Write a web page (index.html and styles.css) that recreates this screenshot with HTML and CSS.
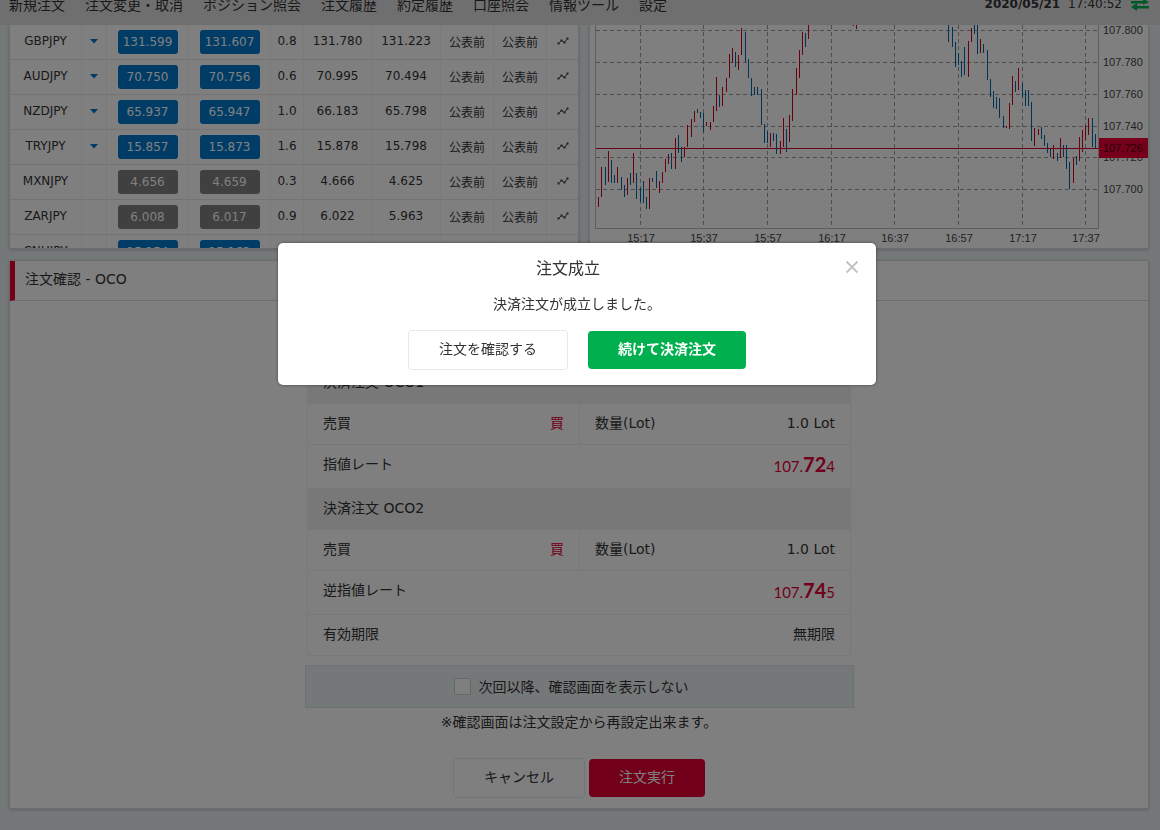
FILE: index.html
```html
<!DOCTYPE html>
<html lang="ja">
<head>
<meta charset="utf-8">
<title>注文確認 - OCO</title>
<link rel="stylesheet" href="styles.css">
</head>
<body>
<header class="topbar">
  <nav class="menu">
    <a href="#">新規注文</a>
    <a href="#">注文変更・取消</a>
    <a href="#">ポジション照会</a>
    <a href="#">注文履歴</a>
    <a href="#">約定履歴</a>
    <a href="#">口座照会</a>
    <a href="#">情報ツール</a>
    <a href="#">設定</a>
  </nav>
  <div class="clock"><b>2020/05/21</b><span>17:40:52</span>
    <svg class="sync" viewBox="0 0 20 16" width="20" height="16" aria-hidden="true"><path d="M1 5h12V2l6 4.500l-6 2V7.500H1zM19 12.500H7V15L1 11l6-4v3h12z"/></svg>
  </div>
</header>

<main class="page">
  <div class="market">
    <section class="panel rates">
      <table class="rate-table">
        <colgroup><col class="c-pair"><col class="c-arrow"><col class="c-price"><col class="c-price"><col class="c-spread"><col class="c-high"><col class="c-low"><col class="c-swap"><col class="c-swap"><col class="c-chart"></colgroup>
        <tbody id="rates"></tbody>
      </table>
    </section>
    <section class="panel chart-panel">
      <svg class="chart" id="chart" viewBox="590 25 558 223" role="img" aria-label="USDJPY"></svg>
    </section>
  </div>

  <section class="panel order">
    <h2 class="order-title">注文確認 - OCO</h2>
    <div class="order-body">
      <div class="detail">
        <div class="row head">決済注文 OCO1</div>
        <div class="row pair">
          <div class="cell"><span>売買</span><span class="buy">買</span></div>
          <div class="cell"><span>数量(Lot)</span><span>1.0 Lot</span></div>
        </div>
        <div class="row tall cell"><span>指値レート</span><span class="rate">107.<b>72</b>4</span></div>
        <div class="row head">決済注文 OCO2</div>
        <div class="row pair">
          <div class="cell"><span>売買</span><span class="buy">買</span></div>
          <div class="cell"><span>数量(Lot)</span><span>1.0 Lot</span></div>
        </div>
        <div class="row tall cell"><span>逆指値レート</span><span class="rate">107.<b>74</b>5</span></div>
        <div class="row cell"><span>有効期限</span><span>無期限</span></div>
      </div>
      <div class="skip">
        <input type="checkbox" id="skip"><label for="skip">次回以降、確認画面を表示しない</label>
      </div>
      <p class="note">※確認画面は注文設定から再設定出来ます。</p>
      <div class="actions">
        <button type="button" class="btn btn-line">キャンセル</button>
        <button type="button" class="btn btn-red">注文実行</button>
      </div>
    </div>
  </section>
</main>

<div class="overlay">
  <div class="modal" role="dialog" aria-modal="true" aria-labelledby="modal-title">
    <div class="modal-head">
      <h1 id="modal-title">注文成立</h1>
      <button type="button" class="close" aria-label="閉じる"><svg viewBox="0 0 14 14" width="14" height="14"><path d="M1.500 1.500l11 11M12.500 1.500l-11 11"/></svg></button>
    </div>
    <p class="message">決済注文が成立しました。</p>
    <div class="modal-actions">
      <button type="button" class="btn btn-line">注文を確認する</button>
      <button type="button" class="btn btn-green">続けて決済注文</button>
    </div>
  </div>
</div>
<script src="app.js"></script>
</body>
</html>
```
FILE: styles.css
```css
* { box-sizing: border-box; }

body {
  margin: 0;
  min-height: 100vh;
  background: #ebf0f3;
  color: #333;
  font: 14px/20px "DejaVu Sans", "Noto Sans CJK JP", sans-serif;
}

h1, h2, p { margin: 0; font-weight: 400; }

button { font: inherit; color: inherit; cursor: pointer; }

/* top menu */
.topbar {
  position: relative;
  z-index: 1;
  display: flex;
  justify-content: space-between;
  align-items: flex-end;
  height: 25px;
  padding: 0 10px 11px 9px;
  overflow: hidden;
  background: #dfdfdf;
}
.menu { display: flex; gap: 20px; font-family: "Noto Sans CJK JP", sans-serif; }
.menu a { color: inherit; text-decoration: none; white-space: nowrap; }
.clock { display: flex; align-items: center; gap: 8px; font-size: 12px; }
.sync { fill: #00b050; }

/* market area */
.page { padding: 0 11px 20px 9px; }
.panel {
  background: #fff;
  border: 1px solid #d5d8db;
  box-shadow: 0 1px 3px rgba(0, 0, 0, .2);
}
.market {
  display: grid;
  grid-template-columns: 57fr 56fr;
  gap: 10px;
  height: 224px;
}
.market .panel { border-top: 0; overflow: hidden; }

.rate-table {
  width: 100%;
  table-layout: fixed;
  border-collapse: separate;
  border-spacing: 0;
  font-size: 12px;
}
.c-pair { width: 72px; }
.c-arrow { width: 25px; }
.c-price { width: 82px; }
.c-spread { width: 33px; }
.c-high { width: 68px; }
.c-low { width: 69px; }
.c-swap { width: 53px; }
.rate-table td {
  height: 35px;
  padding: 0 0 2px;
  text-align: center;
  border-right: 1px solid #f4f5f6;
  border-bottom: 1px solid #e6e6e6;
}
.rate-table td:last-child { border-right: 0; }
.rate-table .price-cell { padding: 0; }
.rate-table .swap { padding: 2px 0 0; }
.price {
  display: block;
  width: 60px;
  height: 24px;
  margin: 0 auto;
  padding: 0;
  border: 0;
  border-radius: 3px;
  background: #0078cd;
  color: #fff;
}
.price.off { background: #808080; }
.drop {
  display: block;
  width: 9px;
  height: 5px;
  margin: 0 auto;
  background: #0078cd;
  clip-path: polygon(0 0, 100% 0, 50% 100%);
}
.mini { display: block; margin: 0 auto; fill: #444; stroke: #444; }
.mini path { fill: none; }

.chart { display: block; width: 100%; font: 11px "Liberation Sans", sans-serif; }
.chart text { fill: #444; }
.chart .grid { stroke: #9c9c9c; fill: none; stroke-dasharray: 4 3; }
.chart .axis { stroke: #bbb; fill: none; }
.chart .up { stroke: #d0021b; fill: none; }
.chart .down { stroke: #0067ad; fill: none; }
.chart .now-line { stroke: #d00030; }
.chart .now-box { fill: #ec0036; }
.chart .now-text { fill: #4c0010; }

/* order confirmation */
.order { margin-top: 11px; }
.order-title {
  height: 40px;
  padding-left: 10px;
  border-left: 5px solid #e60035;
  border-bottom: 1px solid #d8d8d8;
  font-size: 14px;
  line-height: 36px;
}
.order-body {
  display: flex;
  flex-direction: column;
  align-items: center;
  padding: 62px 0 10px;
}
.detail {
  width: 100%;
  max-width: 544px;
  border: solid #f0f0f0;
  border-width: 0 1px;
}
.row { height: 41px; border-bottom: 1px solid #f0f0f0; line-height: 38px; }
.row.head { padding-left: 15px; background: #f0f0f0; }
.row.tall { height: 44px; }
.cell { display: flex; justify-content: space-between; padding: 0 15px; }
.pair { display: grid; grid-template-columns: 1fr 1fr; }
.pair .cell + .cell { border-left: 1px solid #f0f0f0; }
.buy { color: #e60035; }
.rate { color: #e60035; font-family: Lato, sans-serif; font-size: 15px; line-height: 38px; }
.rate b { font-size: 20px; }

.skip {
  display: flex;
  justify-content: center;
  align-items: center;
  gap: 8px;
  width: 100%;
  max-width: 549px;
  height: 43px;
  margin-top: 9px;
  padding-right: 16px;
  border: 1px solid #dde1e5;
  background: #ebf0f3;
}
.skip input {
  appearance: none;
  width: 17px;
  height: 17px;
  margin: 0;
  border: 1px solid #ccc;
  border-radius: 2px;
  background: #fff;
}
.note { margin-top: 4px; }
.actions { display: flex; align-items: center; gap: 4px; margin-top: 26px; }

.btn {
  height: 38px;
  padding: 0 30px 2px;
  border: 0;
  border-radius: 4px;
  white-space: nowrap;
}
.btn-line { height: 40px; border: 1px solid #e6e9ec; background: #fff; }
.btn-red { background: #e60035; color: #fff; }
.btn-green { background: #00b04f; color: #fff; font-weight: 700; }

/* dialog */
.overlay {
  position: fixed;
  inset: 0;
  z-index: 2;
  display: flex;
  justify-content: center;
  align-items: flex-start;
  padding: 243px 6px 0 0;
  background: rgba(0, 0, 0, .5);
}
.modal {
  width: 100%;
  max-width: 598px;
  padding: 15px 17px;
  border-radius: 5px;
  background: #fff;
  box-shadow: 0 0 3px rgba(0, 0, 0, .5);
}
.modal-head { display: flex; align-items: flex-start; height: 20px; }
.modal-head h1 { flex: 1; padding-right: 4px; font-size: 16px; line-height: 22px; text-align: center; }
.close { display: flex; padding: 2px 0 0; border: 0; background: none; }
.close svg { fill: none; stroke: #c4c4c4; stroke-width: 2; }
.message { margin-top: 16px; text-align: center; }
.modal-actions {
  display: flex;
  justify-content: center;
  align-items: center;
  gap: 20px;
  margin-top: 16px;
}
```
FILE: app.js
```js
const quotes = [
  ['GBPJPY', '131.599', '131.607', '0.8', '131.780', '131.223', true],
  ['AUDJPY', '70.750', '70.756', '0.6', '70.995', '70.494', true],
  ['NZDJPY', '65.937', '65.947', '1.0', '66.183', '65.798', true],
  ['TRYJPY', '15.857', '15.873', '1.6', '15.878', '15.798', true],
  ['MXNJPY', '4.656', '4.659', '0.3', '4.666', '4.625', false],
  ['ZARJPY', '6.008', '6.017', '0.9', '6.022', '5.963', false],
  ['CNHJPY', '15.154', '15.162', '0.8', '15.178', '15.098', true]
];
const icon = '<svg class="mini" viewBox="0 0 12 10" width="12" height="10"><path d="M1.500 7.500L4.500 4.500L7.500 6.500L10.500 2.500"/><rect x="1" y="7" width="1" height="1"/><rect x="4" y="4" width="1" height="1"/><rect x="7" y="6" width="1" height="1"/><rect x="10" y="2" width="1" height="1"/></svg>';
document.getElementById('rates').innerHTML = quotes.map(([pair, bid, ask, spread, high, low, open]) => {
  const price = p => `<td class="price-cell"><button type="button" class="price${open ? '' : ' off'}">${p}</button></td>`;
  return `<tr><td>${pair}</td><td>${open ? '<span class="drop"></span>' : ''}</td>${price(bid)}${price(ask)}` +
    `<td>${spread}</td><td>${high}</td><td>${low}</td><td class="swap">公表前</td><td class="swap">公表前</td><td>${icon}</td></tr>`;
}).join('');

// Bars: [time, high, low] in thirds of a chart unit, from each block's origin.
const blocks = [
  {
    x: 590,
    up: [[25,590,622],[34,502,590],[55,452,545],[82,502,550],[112,533,585],[130,460,550],[178,535,628],[208,543,580],[217,517,550],[226,478,517],[235,463,493],[256,415,507],[283,440,470],[292,375,440],[304,358,410],[313,332,366],[349,367,378],[361,365,390],[370,319,367],[379,230,334],[397,260,319],[409,235,277],[418,163,235],[427,143,190],[445,166,210],[454,85,166],[541,398,440],[571,422,462],[580,355,440],[598,345,427],[607,268,363],[619,205,284],[628,149,235],[637,95,166],[655,74,116],[790,74,78],[799,74,86]],
    down: [[46,502,555],[64,479,550],[73,525,550],[94,532,570],[103,556,592],[121,520,556],[139,518,598],[151,565,606],[160,542,608],[169,592,628],[187,533,545],[199,512,565],[244,460,508],[265,404,460],[274,442,486],[322,326,340],[331,335,355],[340,338,396],[388,286,320],[436,157,200],[466,95,186],[475,176,235],[484,235,287],[493,262,284],[502,262,284],[514,268,374],[523,373,430],[532,392,430],[550,398,422],[559,402,462],[589,388,455],[646,100,142]]
  },
  {
    x: 870,
    up: [[295,124,230],[304,85,127],[331,118,158],[409,378,383],[418,310,388],[427,229,316],[445,205,271],[493,383,437],[505,388,406],[550,436,478],[571,415,473],[610,473,550],[628,412,484],[637,391,455],[646,374,420],[655,355,406]],
    down: [[235,74,125],[247,80,142],[256,127,200],[265,158,196],[274,182,230],[283,140,224],[313,74,101],[322,74,163],[340,133,158],[352,151,239],[361,238,292],[370,272,325],[379,292,326],[388,295,355],[400,349,383],[436,244,277],[457,248,292],[466,271,317],[475,271,318],[484,307,422],[514,382,416],[523,406,437],[532,430,460],[541,446,472],[562,460,484],[580,436,472],[589,436,508],[598,487,568],[619,469,494],[667,355,440],[676,403,445]]
  }
];
const times = [[640, '15:17'], [703, '15:37'], [767, '15:57'], [831, '16:17'], [894, '16:37'], [958, '16:57'], [1022, '17:17'], [1085, '17:37']];
const levels = [[30, '107.800'], [62, '107.780'], [94, '107.760'], [126, '107.740'], [157, '107.720'], [189, '107.700']];
const bars = key => blocks.map(b => b[key].map(([t, hi, lo]) =>
  `M${b.x + Math.floor(t / 3) + 0.5} ${Math.round(hi / 3)}V${Math.round(lo / 3)}`).join('')).join('');
document.getElementById('chart').innerHTML =
  `<path class="grid" d="${times.map(([x]) => `M${x + 0.5} 25V228`).join('')}${levels.map(([y]) => `M596 ${y + 0.5}H1098`).join('')}"/>` +
  '<path class="axis" d="M595.5 25V228.500H1098.500V25"/>' +
  `<path class="up" d="${bars('up')}"/><path class="down" d="${bars('down')}"/>` +
  levels.map(([y, t]) => `<text x="1103" y="${y + 4}">${t}</text>`).join('') +
  times.map(([x, t]) => `<text x="${x + 1}" y="242" text-anchor="middle">${t}</text>`).join('') +
  '<path class="now-line" d="M596 148.500H1099"/><rect class="now-box" x="1099" y="138" width="49" height="20"/>' +
  '<text class="now-text" x="1103" y="152">107.726</text>';
```
